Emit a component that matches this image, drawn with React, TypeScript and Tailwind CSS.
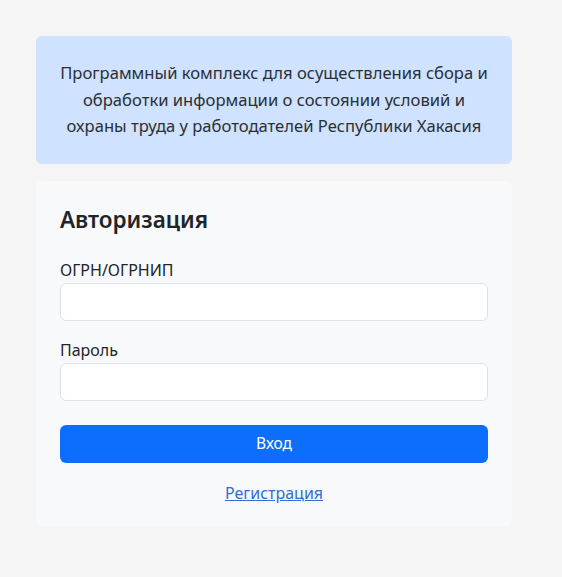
import React from "react";

export default function App() {
  return (
    <div
      className="min-h-[577px] w-full bg-[#f5f5f5] pt-9 pl-9"
      style={{ fontFamily: '"Noto Sans", "Open Sans", sans-serif' }}
    >
      <div className="w-[476px]">
        <div className="rounded-md bg-[#cfe2ff] px-6 py-6 text-center text-[16.6px] leading-[26.5px] text-[#2b2f33]">
          Программный комплекс для осуществления сбора и обработки информации о состоянии условий и охраны труда у работодателей Республики Хакасия
        </div>
        <div className="mt-[17px] rounded-md bg-[#f8f9fa] px-6 pt-6 pb-[21px]">
          <h2 className="text-[22.5px] font-semibold leading-[30px] text-[#212529]">Авторизация</h2>
          <div className="mt-[23px] text-[16px] leading-[24px] text-[#212529]">ОГРН/ОГРНИП</div>
          <input
            type="text"
            className="mt-[1px] block h-[38px] w-full rounded-md border border-[#dee2e6] bg-white px-3 outline-none"
          />
          <div className="mt-[17px] text-[16px] leading-[24px] text-[#212529]">Пароль</div>
          <input
            type="password"
            className="mt-[1px] block h-[38px] w-full rounded-md border border-[#dee2e6] bg-white px-3 outline-none"
          />
          <button className="mt-[24px] block h-[38px] w-full rounded-md bg-[#0d6efd] text-[15.5px] text-white">
            Вход
          </button>
          <div className="mt-[18px] text-center">
            <a href="#" className="text-[16px] leading-[24px] text-[#2f6fd6] underline">Регистрация</a>
          </div>
        </div>
      </div>
    </div>
  );
}
